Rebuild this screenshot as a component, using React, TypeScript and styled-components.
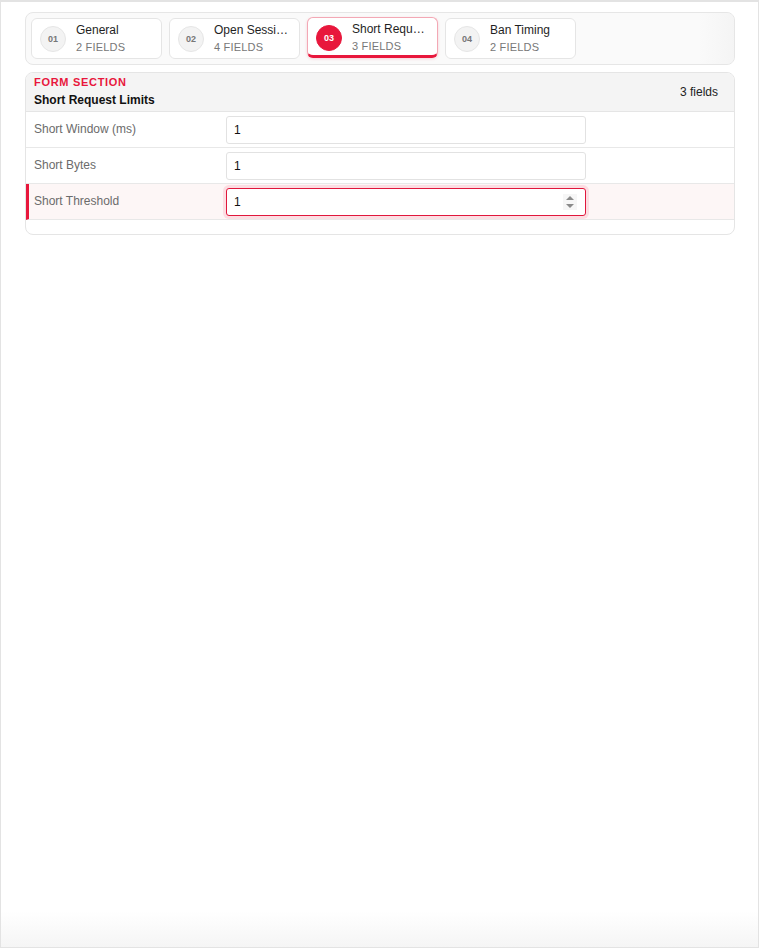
import React from "react";
import styled, { createGlobalStyle, css } from "styled-components";

const Global = createGlobalStyle`
  html, body { margin: 0; padding: 0; }
  body { font-family: "Liberation Sans", Arial, sans-serif; background: #fff; }
  * { box-sizing: border-box; }
`;

const Frame = styled.div`
  width: 759px;
  height: 948px;
  border: 1px solid #e3e3e3;
  border-top-width: 2px;
  background: linear-gradient(to bottom, #ffffff calc(100% - 36px), #f5f5f5 100%);
  padding: 10px 23px 0 24px;
  display: flex;
  flex-direction: column;
  gap: 7px;
`;

const TabStrip = styled.div`
  position: relative;
  display: flex;
  gap: 7px;
  padding: 5px;
  border: 1px solid #e6e6e6;
  border-radius: 8px;
  background: #fafafa;
  overflow: hidden;
  &::after {
    content: "";
    position: absolute;
    top: 0;
    right: 0;
    bottom: 0;
    width: 36px;
    background: linear-gradient(to right, rgba(243, 243, 243, 0), rgba(243, 243, 243, 0.8));
    pointer-events: none;
  }
`;

const Tab = styled.div<{ $active?: boolean }>`
  width: 131px;
  height: 41px;
  flex: none;
  display: flex;
  align-items: center;
  gap: 10px;
  padding: 0 8px;
  background: #fff;
  border: 1px solid #e5e5e5;
  border-radius: 6px;
  ${(p) =>
    p.$active &&
    css`
      border-color: #f3a8b5;
      border-bottom: 3px solid #e8173c;
      transform: translateY(-1px);
      box-shadow: 0 1px 3px rgba(232, 23, 60, 0.18);
      padding-top: 2px;
    `}
`;

const Badge = styled.span<{ $active?: boolean }>`
  width: 26px;
  height: 26px;
  flex: none;
  border-radius: 50%;
  display: flex;
  align-items: center;
  justify-content: center;
  font-size: 9px;
  font-weight: 700;
  background: ${(p) => (p.$active ? "#e8173c" : "#f3f3f3")};
  color: ${(p) => (p.$active ? "#fff" : "#777")};
  border: 1px solid ${(p) => (p.$active ? "#e8173c" : "#e6e6e6")};
`;

const TabText = styled.div`
  display: flex;
  flex-direction: column;
  gap: 4px;
  min-width: 0;
`;

const TabTitle = styled.span`
  font-size: 12px;
  color: #1f1f1f;
  white-space: nowrap;
  overflow: hidden;
  text-overflow: ellipsis;
  line-height: 14px;
`;

const TabMeta = styled.span`
  font-size: 11px;
  color: #777;
  letter-spacing: 0.2px;
  line-height: 13px;
`;

const Card = styled.section`
  border: 1px solid #e5e5e5;
  border-radius: 8px;
  overflow: hidden;
  padding-bottom: 14px;
  background: #fff;
`;

const CardHeader = styled.header`
  display: flex;
  align-items: center;
  justify-content: space-between;
  background: #f4f4f4;
  border-bottom: 1px solid #e5e5e5;
  padding: 2px 16px 3px 8px;
  height: 39px;
`;

const HeaderTitles = styled.div`
  display: flex;
  flex-direction: column;
  gap: 4px;
`;

const Kicker = styled.span`
  font-size: 11px;
  font-weight: 700;
  color: #e8173c;
  letter-spacing: 0.7px;
  line-height: 13px;
`;

const SectionTitle = styled.span`
  font-size: 12px;
  font-weight: 700;
  color: #111;
  line-height: 14px;
`;

const Count = styled.span`
  font-size: 12px;
  color: #222;
`;

const Row = styled.div<{ $active?: boolean }>`
  display: grid;
  grid-template-columns: 192px 360px 1fr;
  align-items: center;
  height: 36px;
  padding-left: 8px;
  border-bottom: 1px solid #e8e8e8;
  ${(p) =>
    p.$active &&
    css`
      background: #fdf6f6;
      border-left: 3px solid #e8173c;
      padding-left: 5px;
    `}
`;

const Label = styled.span`
  font-size: 12px;
  color: #6b6b6b;
  margin-bottom: 2px;
`;

const InputWrap = styled.div`
  position: relative;
  height: 28px;
`;

const Input = styled.input<{ $active?: boolean }>`
  width: 100%;
  height: 28px;
  border: 1px solid #e2e2e2;
  border-radius: 3px;
  padding: 0 7px;
  font-family: "Liberation Sans", Arial, sans-serif;
  font-size: 12px;
  color: #111;
  background: #fff;
  outline: none;
  ${(p) =>
    p.$active &&
    css`
      border-color: #e0173c;
      box-shadow: 0 0 0 3px #fcdde2;
    `}
`;

const Spinner = styled.span`
  position: absolute;
  right: 9px;
  top: 6px;
  width: 14px;
  height: 16px;
  background: #f6f6f6;
  display: flex;
  align-items: center;
  justify-content: center;
`;

const fields = [
  { label: "Short Window (ms)", value: "1" },
  { label: "Short Bytes", value: "1" },
  { label: "Short Threshold", value: "1", active: true },
];

const tabs = [
  { n: "01", title: "General", meta: "2 FIELDS" },
  { n: "02", title: "Open Sessions", meta: "4 FIELDS" },
  { n: "03", title: "Short Requests", meta: "3 FIELDS", active: true },
  { n: "04", title: "Ban Timing", meta: "2 FIELDS" },
];

export default function App() {
  return (
    <>
      <Global />
      <Frame>
        <TabStrip>
          {tabs.map((t) => (
            <Tab key={t.n} $active={t.active}>
              <Badge $active={t.active}>{t.n}</Badge>
              <TabText>
                <TabTitle>{t.title}</TabTitle>
                <TabMeta>{t.meta}</TabMeta>
              </TabText>
            </Tab>
          ))}
        </TabStrip>
        <Card>
          <CardHeader>
            <HeaderTitles>
              <Kicker>FORM SECTION</Kicker>
              <SectionTitle>Short Request Limits</SectionTitle>
            </HeaderTitles>
            <Count>3 fields</Count>
          </CardHeader>
          {fields.map((f) => (
            <Row key={f.label} $active={f.active}>
              <Label>{f.label}</Label>
              <InputWrap>
                <Input type="text" defaultValue={f.value} $active={f.active} readOnly />
                {f.active && (
                  <Spinner>
                    <svg width="10" height="14" viewBox="0 0 10 14">
                      <path d="M5 1 L9 5 H1 Z" fill="#8a8a8a" />
                      <path d="M1 9 H9 L5 13 Z" fill="#8a8a8a" />
                    </svg>
                  </Spinner>
                )}
              </InputWrap>
              <span />
            </Row>
          ))}
        </Card>
      </Frame>
    </>
  );
}
